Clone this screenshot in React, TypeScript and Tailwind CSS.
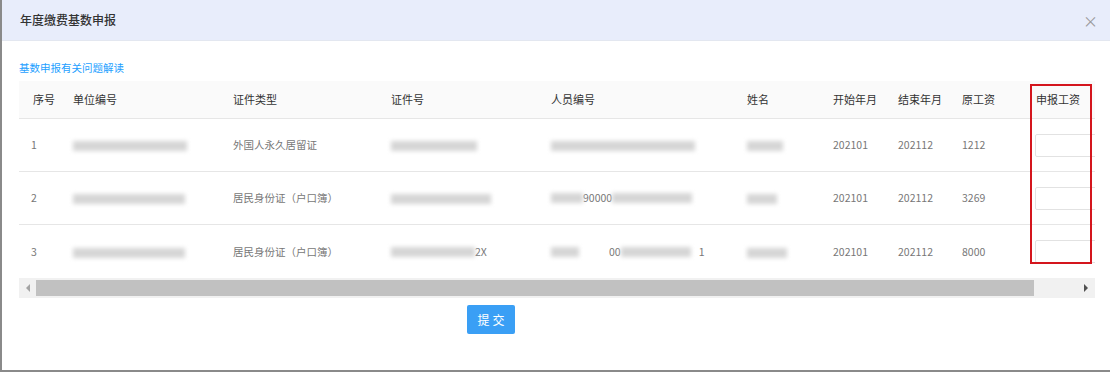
import React from 'react';

const font = { fontFamily: '"Noto Sans CJK SC", "Noto Sans", sans-serif' };

const cols = 'grid grid-cols-[40px_160px_158px_160px_196px_86px_65px_64px_74px_80px]';

const headers = ['序号', '单位编号', '证件类型', '证件号', '人员编号', '姓名', '开始年月', '结束年月', '原工资', '申报工资'];

function Blur({ w, tone = 'bg-[#d6d6d6]' }: { w: number; tone?: string }) {
    return <span className={`inline-block h-[10px] ${tone} blur-[2px] align-middle`} style={{ width: w }} />;
}

const rows = [
    {
        no: '1',
        unit: <Blur w={114} />,
        type: '外国人永久居留证',
        id: <Blur w={86} />,
        person: <Blur w={144} />,
        name: <Blur w={36} />,
        start: '202101',
        end: '202112',
        wage: '1212',
    },
    {
        no: '2',
        unit: <Blur w={112} />,
        type: '居民身份证（户口簿）',
        id: <Blur w={100} />,
        person: (
            <span className="flex items-center">
                <Blur w={32} />
                <span>90000</span>
                <Blur w={80} />
            </span>
        ),
        name: <Blur w={30} />,
        start: '202101',
        end: '202112',
        wage: '3269',
    },
    {
        no: '3',
        unit: <Blur w={112} />,
        type: '居民身份证（户口簿）',
        id: (
            <span className="flex items-center">
                <Blur w={84} />
                <span>2X</span>
            </span>
        ),
        person: (
            <span className="flex items-center">
                <Blur w={28} />
                <span className="ml-[30px]">00</span>
                <Blur w={70} />
                <span className="ml-[8px]">1</span>
            </span>
        ),
        name: <Blur w={40} />,
        start: '202101',
        end: '202112',
        wage: '8000',
    },
];

export default function App() {
    return (
        <div className="w-[1110px] h-[372px] bg-white relative overflow-hidden" style={font}>
            <div className="h-[372px] border-l-2 border-b-2 border-[#8a8a8a] flex flex-col">
                {/* header */}
                <div className="h-[41px] bg-[#e8edfb] border-b border-[#e3e7f0] flex items-center justify-between pl-[18px] pr-[12px] shrink-0">
                    <span className="text-[12px] text-[#333] font-medium">年度缴费基数申报</span>
                    <span className="text-[#9a9a9a] text-[15px] leading-none">×</span>
                </div>

                <div className="pl-[17px] pt-[12px]">
                    <span className="text-[10.5px] text-[#1e9fff] leading-none">基数申报有关问题解读</span>
                </div>

                {/* table */}
                <div className="ml-[17px] mr-[15px] mt-[4px] overflow-hidden">
                    <div className={`${cols} h-[38px] items-center bg-[#fafafa] border-b border-[#e6e6e6] text-[11px] text-[#333]`}>
                        {headers.map((h) => (
                            <div key={h} className="pl-[14px] whitespace-nowrap">{h}</div>
                        ))}
                    </div>
                    {rows.map((r, i) => (
                        <div
                            key={r.no}
                            className={`${cols} h-[53px] items-center text-[10.5px] text-[#777] ${i < 2 ? 'border-b border-[#e6e6e6]' : ''}`}
                        >
                            <div className="pl-[12px]">{r.no}</div>
                            <div className="pl-[14px]">{r.unit}</div>
                            <div className="pl-[14px] whitespace-nowrap">{r.type}</div>
                            <div className="pl-[14px]">{r.id}</div>
                            <div className="pl-[14px]">{r.person}</div>
                            <div className="pl-[14px]">{r.name}</div>
                            <div className="pl-[14px]">{r.start}</div>
                            <div className="pl-[14px]">{r.end}</div>
                            <div className="pl-[14px]">{r.wage}</div>
                            <div className="pl-[13px]">
                                <div className="h-[23px] w-[70px] border border-[#e2e2e2] rounded-[2px] bg-white" />
                            </div>
                        </div>
                    ))}

                    {/* horizontal scrollbar */}
                    <div className="h-[20px] bg-[#f1f1f1] flex items-center">
                        <div className="w-[17px] flex justify-center">
                            <span className="w-0 h-0 border-y-[4px] border-y-transparent border-r-[4px] border-r-[#a3a3a3]" />
                        </div>
                        <div className="h-[16px] w-[998px] bg-[#c1c1c1]" />
                        <div className="flex-1 flex justify-end pr-[7px]">
                            <span className="w-0 h-0 border-y-[4px] border-y-transparent border-l-[4px] border-l-[#505050]" />
                        </div>
                    </div>
                </div>

                <div className="flex justify-center pt-[7px] pr-[130px]">
                    <button className="w-[48px] h-[29px] bg-[#3a9ff5] rounded-[2px] text-white text-[12px] tracking-[3px] pl-[3px]">
                        提交
                    </button>
                </div>
            </div>

            {/* annotation box */}
            <div className="absolute left-[1030px] top-[84px] w-[62px] h-[180px] border-2 border-[#d4151d]" />
        </div>
    );
}
